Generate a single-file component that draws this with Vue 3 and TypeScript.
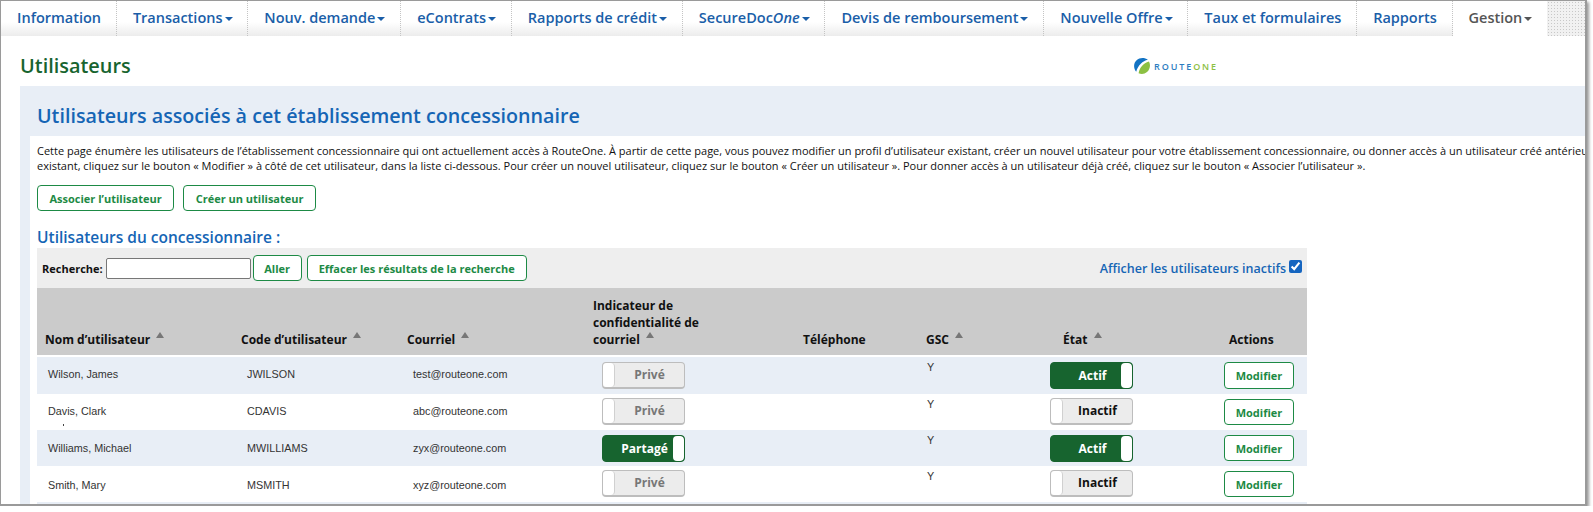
<template>
  <div class="window">
    <nav class="tabs">
      <a v-for="tab in tabs" :key="tab.label" class="tab" :class="{ 'tab--active': tab.active }">
        <template v-if="tab.label === 'SecureDoc'">SecureDoc<em>One</em></template>
        <template v-else>{{ tab.label }}</template>
        <span v-if="tab.menu" class="tab__caret"></span>
      </a>
      <div class="tabs__rest"></div>
    </nav>

    <header class="page-head">
      <h1 class="page-head__title">Utilisateurs</h1>
      <div class="logo">
        <svg class="logo__mark" width="16" height="16" viewBox="0 0 16 16">
          <path d="M2.2 13.8C-0.8 10.2 -0.5 5 2.6 2.3C5.6 -0.5 10.6 -0.6 13.9 1.8C8.6 3 4.2 7 2.2 13.8Z" fill="#1273c4" />
          <path d="M4.6 15.2C5.6 9.4 9.2 5.2 15 3.4C16.8 7 16.1 11.5 13 14C10.6 16.2 7.2 16.5 4.6 15.2Z" fill="#8cc043" />
        </svg>
        <span class="logo__route">ROUTE</span><span class="logo__one">ONE</span>
      </div>
    </header>

    <section class="panel">
      <h2 class="panel__title">Utilisateurs associés à cet établissement concessionnaire</h2>
      <div class="panel__body">
        <p class="intro">
          Cette page énumère les utilisateurs de l’établissement concessionnaire qui ont actuellement accès à RouteOne. À partir de cette page, vous pouvez modifier un profil d’utilisateur existant, créer un nouvel utilisateur pour votre établissement concessionnaire, ou donner accès à un utilisateur créé antérieurement.<br />
          existant, cliquez sur le bouton « Modifier » à côté de cet utilisateur, dans la liste ci-dessous. Pour créer un nouvel utilisateur, cliquez sur le bouton « Créer un utilisateur ». Pour donner accès à un utilisateur déjà créé, cliquez sur le bouton « Associer l’utilisateur ».
        </p>
        <div class="actions">
          <button class="btn btn--wide">Associer l’utilisateur</button>
          <button class="btn btn--wide">Créer un utilisateur</button>
        </div>
        <h3 class="list-title">Utilisateurs du concessionnaire :</h3>

        <div class="list">
          <div class="search">
            <label class="search__label" for="q">Recherche:</label>
            <input id="q" class="search__input" type="text" />
            <button class="btn btn--search">Aller</button>
            <button class="btn btn--clear">Effacer les résultats de la recherche</button>
            <label class="search__inactive">
              Afficher les utilisateurs inactifs
              <input type="checkbox" checked />
            </label>
          </div>

          <table class="users">
            <colgroup>
              <col class="c-name" /><col class="c-code" /><col class="c-mail" /><col class="c-priv" />
              <col class="c-tel" /><col class="c-gsc" /><col class="c-state" /><col class="c-act" />
            </colgroup>
            <thead>
              <tr>
                <th class="th-name">Nom d’utilisateur <span class="sort"></span></th>
                <th>Code d’utilisateur <span class="sort"></span></th>
                <th>Courriel <span class="sort"></span></th>
                <th>Indicateur de<br />confidentialité de<br />courriel <span class="sort"></span></th>
                <th>Téléphone</th>
                <th>GSC <span class="sort"></span></th>
                <th class="th-state">État <span class="sort"></span></th>
                <th class="th-act">Actions</th>
              </tr>
            </thead>
            <tbody>
              <tr v-for="user in users" :key="user.code">
                <td class="td-text td-name">
                  {{ user.name }}
                  <span v-if="user.code === 'CDAVIS'" class="speck"></span>
                </td>
                <td class="td-text td-code">{{ user.code }}</td>
                <td class="td-text td-mail">{{ user.mail }}</td>
                <td class="td-toggle">
                  <div class="toggle toggle--priv" :class="{ 'toggle--on': user.shared }">
                    <span class="toggle__knob"></span>
                    <span class="toggle__text">{{ user.shared ? 'Partagé' : 'Privé' }}</span>
                  </div>
                </td>
                <td></td>
                <td class="td-gsc">Y</td>
                <td class="td-toggle td-state">
                  <div class="toggle toggle--state" :class="{ 'toggle--on': user.active }">
                    <span class="toggle__knob"></span>
                    <span class="toggle__text">{{ user.active ? 'Actif' : 'Inactif' }}</span>
                  </div>
                </td>
                <td class="td-act"><button class="btn btn--edit">Modifier</button></td>
              </tr>
              <tr class="spare"><td colspan="8"></td></tr>
            </tbody>
          </table>
        </div>
      </div>
    </section>
  </div>
</template>

<script setup lang="ts">
interface Tab {
  label: string
  menu?: boolean
  active?: boolean
}

interface User {
  name: string
  code: string
  mail: string
  shared: boolean
  active: boolean
}

const tabs: Tab[] = [
  { label: 'Information' },
  { label: 'Transactions', menu: true },
  { label: 'Nouv. demande', menu: true },
  { label: 'eContrats', menu: true },
  { label: 'Rapports de crédit', menu: true },
  { label: 'SecureDoc', menu: true },
  { label: 'Devis de remboursement', menu: true },
  { label: 'Nouvelle Offre', menu: true },
  { label: 'Taux et formulaires' },
  { label: 'Rapports' },
  { label: 'Gestion', menu: true, active: true },
]

const users: User[] = [
  { name: 'Wilson, James', code: 'JWILSON', mail: 'test@routeone.com', shared: false, active: true },
  { name: 'Davis, Clark', code: 'CDAVIS', mail: 'abc@routeone.com', shared: false, active: false },
  { name: 'Williams, Michael', code: 'MWILLIAMS', mail: 'zyx@routeone.com', shared: true, active: true },
  { name: 'Smith, Mary', code: 'MSMITH', mail: 'xyz@routeone.com', shared: false, active: false },
]
</script>

<style>
html,
body {
  background: #fff;
}
</style>

<style scoped>
.window {
  width: 1587px;
  height: 506px;
  box-sizing: border-box;
  border: 1px solid #9a9a9a;
  border-width: 1px 2px 2px 1px;
  box-shadow: 2px 2px 3px rgba(0, 0, 0, 0.4);
  overflow: hidden;
  background: #fff;
  font-family: "Open Sans", sans-serif;
}

.tabs {
  display: flex;
  height: 35px;
}

.tab {
  display: flex;
  align-items: center;
  flex: none;
  height: 35px;
  box-sizing: border-box;
  padding: 0 14.8px 2px 16px;
  border-right: 1px dotted #c4c4c4;
  background: linear-gradient(#fff 60%, #ececec);
  color: #1a5ea8;
  font-size: 14.5px;
  font-weight: 600;
  white-space: nowrap;
}

.tab em {
  font-style: italic;
}

.tab--active {
  background: #fff;
  color: #555;
  border-right: none;
}

.tab__caret {
  margin: 2px 0 0 2px;
  border-top: 4px solid currentColor;
  border-left: 4px solid transparent;
  border-right: 4px solid transparent;
}

.tabs__rest {
  flex: 1;
  background-color: #f1f1f1;
  background-image: radial-gradient(#c8c8c8 0.7px, transparent 0.8px);
  background-size: 3px 3px;
}

.page-head {
  position: relative;
  height: 50px;
  display: flex;
  align-items: center;
  padding: 0 0 0 19px;
}

.page-head__title {
  margin: 8px 0 0;
  color: #17642f;
  font-size: 19.9px;
  font-weight: 600;
}

.logo {
  position: absolute;
  left: 1133px;
  top: 22px;
  display: flex;
  align-items: center;
  font-size: 9px;
  font-weight: 600;
  letter-spacing: 1.9px;
}

.logo__mark {
  margin-right: 4px;
}

.logo__route {
  color: #2b7cbf;
}

.logo__one {
  color: #8cc043;
}

.panel {
  margin-left: 19px;
  background: #e8eef6;
  padding-left: 10px;
  height: 420px;
}

.panel__title {
  margin: 0;
  padding: 0 0 0 7px;
  height: 50px;
  box-sizing: border-box;
  display: flex;
  align-items: center;
  color: #1565b5;
  font-size: 19.7px;
  font-weight: 600;
  position: relative;
  top: 4px;
}

.panel__body {
  background: #fff;
  height: 370px;
  padding: 7px 0 0 7px;
}

.intro {
  margin: 0;
  font-size: 11px;
  line-height: 15px;
  color: #111;
  white-space: nowrap;
}

.actions {
  display: flex;
  gap: 9px;
  margin-top: 12px;
}

.btn {
  box-sizing: border-box;
  border: 1px solid #1d8a45;
  border-radius: 4px;
  background: #fff;
  color: #1d8a45;
  font-family: "Open Sans", sans-serif;
  font-size: 11px;
  font-weight: 700;
  padding: 0;
  height: 26px;
  white-space: nowrap;
}

.btn--wide {
  padding: 0 11.5px;
}

.list-title {
  margin: 16px 0 1px;
  color: #1565b5;
  font-size: 15.5px;
  font-weight: 600;
  line-height: 20px;
}

.list {
  width: 1270px;
}

.search {
  display: flex;
  align-items: center;
  height: 40px;
  background: #eee;
  padding: 0 5px;
  box-sizing: border-box;
}

.search__label {
  font-size: 11px;
  font-weight: 700;
  color: #111;
  margin-right: 3px;
}

.search__input {
  width: 145px;
  height: 21px;
  box-sizing: border-box;
  border: 1px solid #777;
  border-radius: 2px;
  padding: 0;
  background: #fff;
}

.btn--search {
  margin-left: 2px;
  width: 49px;
}

.btn--clear {
  margin-left: 5px;
  width: 220px;
}

.search__inactive {
  display: flex;
  align-items: center;
  gap: 3px;
  margin-left: auto;
  color: #1565b5;
  font-size: 12.5px;
  font-weight: 600;
}

.search__inactive input {
  margin: -4px 0 0;
  width: 13px;
  height: 13px;
  accent-color: #1565c0;
}

.users {
  width: 1270px;
  table-layout: fixed;
  border-collapse: separate;
  border-spacing: 0;
}

.c-name { width: 196px; }
.c-code { width: 166px; }
.c-mail { width: 186px; }
.c-priv { width: 210px; }
.c-tel { width: 123px; }
.c-gsc { width: 122px; }
.c-state { width: 176px; }
.c-act { width: 91px; }

.users th {
  box-sizing: border-box;
  background: #cbcbcb;
  border-bottom: 2px solid #fff;
  height: 69px;
  padding: 0 0 7px 8px;
  vertical-align: bottom;
  text-align: left;
  color: #111;
  font-size: 12px;
  font-weight: 700;
  line-height: 17px;
}

.users .th-state {
  padding-left: 23px;
}

.users .th-act {
  padding-left: 13px;
}

.sort {
  display: inline-block;
  margin-left: 3px;
  vertical-align: 6px;
  border-bottom: 6px solid #777;
  border-left: 4.5px solid transparent;
  border-right: 4.5px solid transparent;
}

.users td {
  height: 36px;
  box-sizing: border-box;
  padding: 0;
  vertical-align: top;
  color: #333;
  font-family: "Liberation Sans", Arial, sans-serif;
  font-size: 10.8px;
  line-height: 14px;
}

.users tbody tr:nth-child(odd) td {
  background: #e8eef6;
}

.users tbody tr:first-child td {
  height: 37px;
}

.users .td-text {
  padding-top: 10px;
}

.users tbody tr:nth-child(3) .td-text {
  padding-top: 11px;
}

.users tbody tr:nth-child(4) .td-text {
  padding-top: 12px;
}

.users .td-name {
  position: relative;
  padding-left: 11px;
}

.speck {
  position: absolute;
  left: 26px;
  top: 30px;
  width: 1px;
  height: 2px;
  background: #444;
}

.users .td-code {
  padding-left: 14px;
}

.users .td-mail {
  padding-left: 14px;
}

.users .td-gsc {
  padding: 3px 0 0 9px;
}

.users .td-toggle {
  padding: 4px 0 0 17px;
}

.users tbody tr:first-child .td-toggle,
.users tbody tr:nth-child(3) .td-toggle {
  padding-top: 5px;
}

.users .td-state {
  padding-left: 10px;
}

.users .td-act {
  padding: 5px 0 0 8px;
}

.toggle {
  display: flex;
  width: 83px;
  height: 27px;
  box-sizing: border-box;
  border: 1px solid #bdbdbd;
  border-bottom-width: 2px;
  border-radius: 4px;
  background: #ececec;
  overflow: hidden;
  font-family: "Open Sans", sans-serif;
  font-size: 12px;
  font-weight: 700;
}

.toggle__knob {
  flex: none;
  width: 11px;
  background: #fff;
  border-radius: 4px;
  border-right: 1px solid #d0d0d0;
}

.toggle__text {
  flex: 1;
  display: flex;
  align-items: center;
  justify-content: center;
}

.toggle--priv .toggle__text {
  color: #777;
}

.toggle--state .toggle__text {
  color: #111;
}

.toggle.toggle--on {
  flex-direction: row-reverse;
  background: #17642f;
  border: 1px solid #17642f;
}

.toggle.toggle--on .toggle__text {
  color: #fff;
  padding-left: 13px;
}

.toggle--on .toggle__knob {
  border-right: none;
}

.btn--edit {
  width: 70px;
  height: 26px;
}

.users tbody tr:first-child .btn--edit {
  height: 27px;
}

.spare td {
  height: 10px;
  padding: 0;
}
</style>
